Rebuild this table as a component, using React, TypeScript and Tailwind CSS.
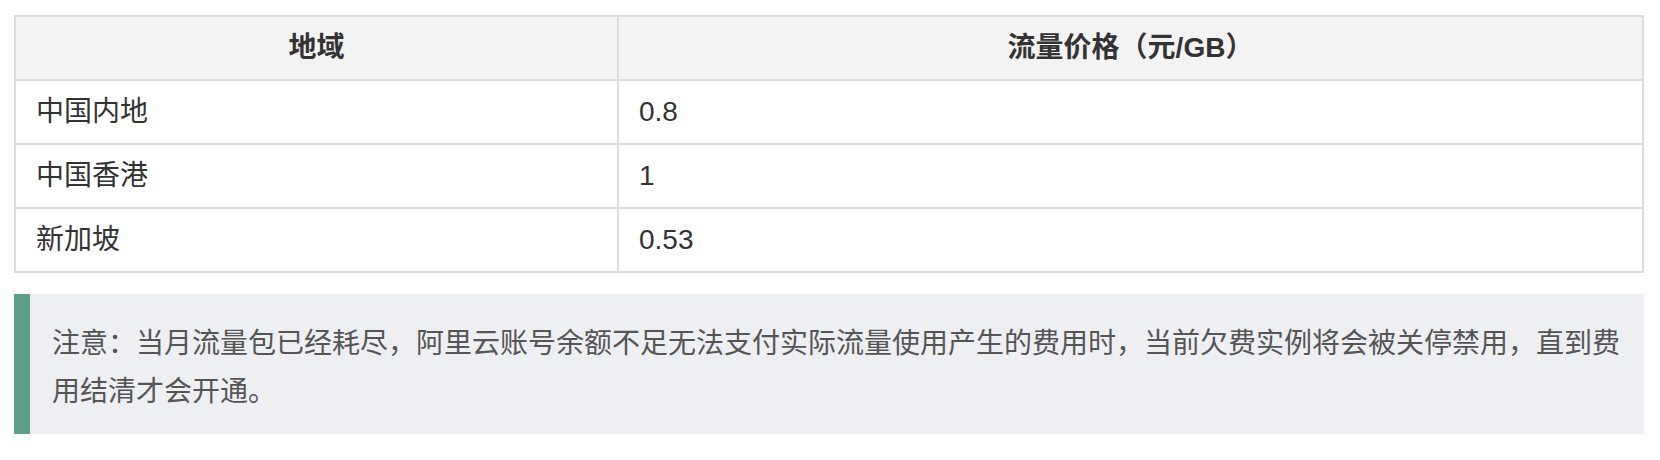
const rows = [
  { region: "中国内地", price: "0.8" },
  { region: "中国香港", price: "1" },
  { region: "新加坡", price: "0.53" },
];

export default function App() {
  return (
    <div
      className="min-h-screen bg-white pt-[15px] pl-[14px] pr-[16px] text-[28px] text-[#333333]"
      style={{ fontFamily: '"Liberation Sans", "Noto Sans CJK SC", sans-serif' }}
    >
      <table className="w-full border-collapse border-2 border-[#dddddd]">
        <thead>
          <tr className="bg-[#f3f3f3]">
            <th className="w-[603px] border-2 border-[#dddddd] px-[20px] py-[10px] text-center font-bold leading-[42px]">
              地域
            </th>
            <th className="border-2 border-[#dddddd] px-[20px] py-[10px] text-center font-bold leading-[42px]">
              流量价格（元/GB）
            </th>
          </tr>
        </thead>
        <tbody>
          {rows.map((row) => (
            <tr key={row.region}>
              <td className="border-2 border-[#dddddd] px-[20px] py-[10px] leading-[42px]">{row.region}</td>
              <td className="border-2 border-[#dddddd] px-[20px] py-[10px] leading-[42px]">{row.price}</td>
            </tr>
          ))}
        </tbody>
      </table>

      <div className="mt-[21px] flex bg-[#eeeff3]">
        <div className="w-[16px] shrink-0 bg-[#5f9e89]" />
        <p className="pt-[26px] pb-[18px] pl-[22px] pr-[14px] leading-[48px] text-[#555555]">
          注意：当月流量包已经耗尽，阿里云账号余额不足无法支付实际流量使用产生的费用时，当前欠费实例将会被关停禁用，直到费用结清才会开通。
        </p>
      </div>
    </div>
  );
}
